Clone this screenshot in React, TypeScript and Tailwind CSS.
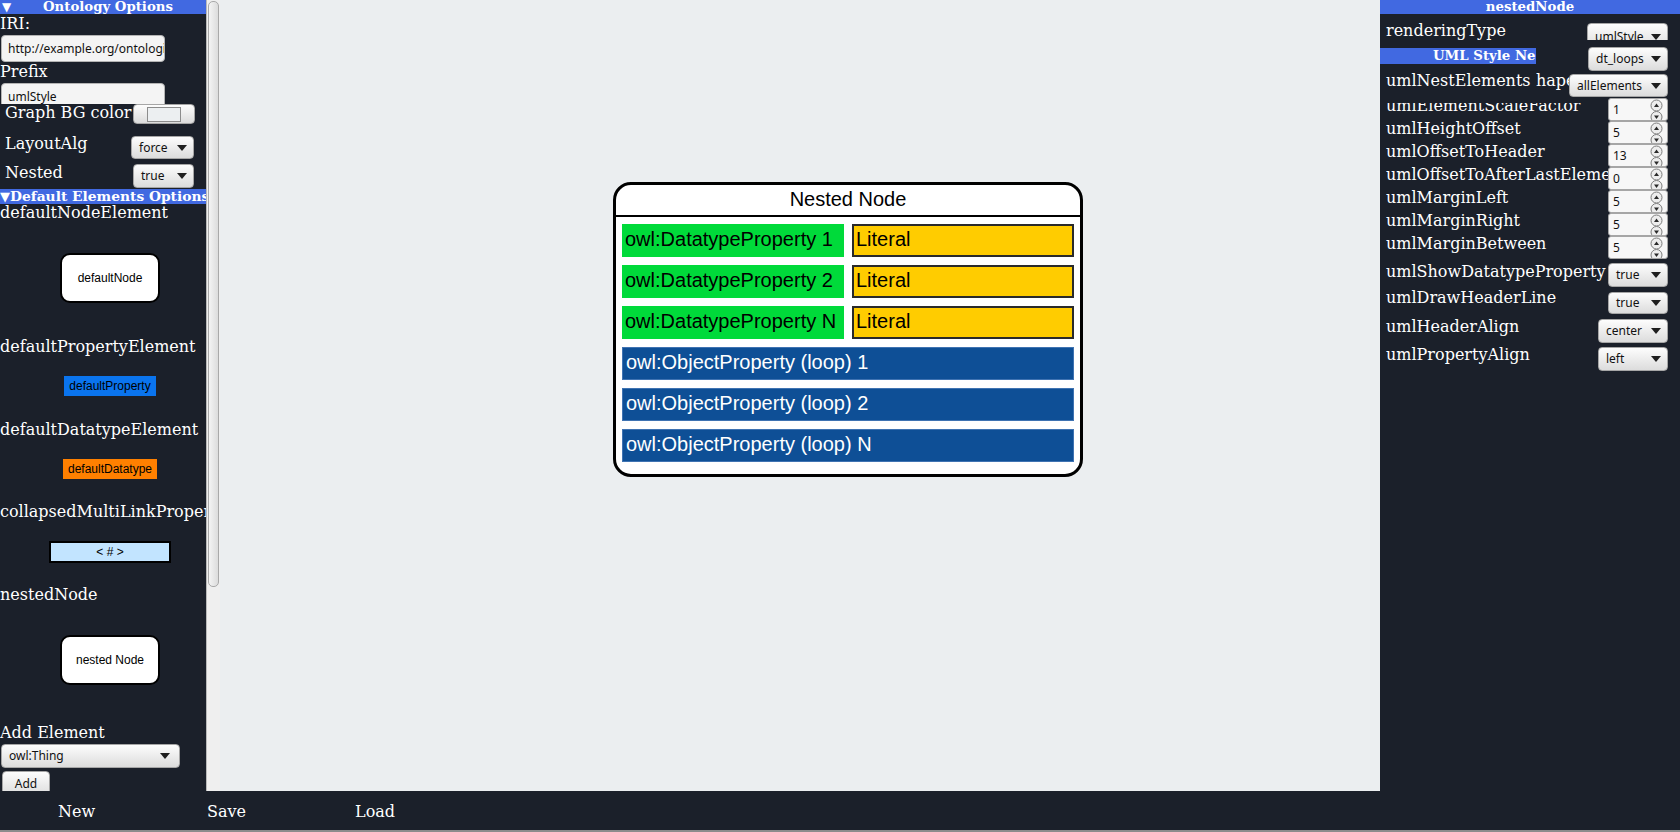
import React from "react";

const serif = "font-['DejaVu_Serif',serif]";
const ui = "font-['Noto_Sans',sans-serif]";
const arial = "font-['Liberation_Sans',Arial,sans-serif]";

function Arrow() {
  return (
    <svg width="10" height="6" viewBox="0 0 10 6" className="shrink-0">
      <path d="M0 0H10L5 6Z" fill="#1f1f1f" />
    </svg>
  );
}

function Sel({ label, className = "" }: { label: string; className?: string }) {
  return (
    <div
      className={`flex shrink-0 items-center justify-between rounded-[4px] border border-[#a6a6a6] bg-linear-to-b from-[#fdfdfd] to-[#dcdcdc] pl-[7px] pr-[6px] text-[12px] leading-none text-[#111] ${ui} ${className}`}
    >
      <span>{label}</span>
      <Arrow />
    </div>
  );
}

function Spin() {
  return (
    <svg width="13" height="21" viewBox="0 0 13 21" className="shrink-0 overflow-hidden">
      <circle cx="6.5" cy="6.5" r="5.5" fill="#ededed" stroke="#7d7d7d" strokeWidth="1" />
      <path d="M4 8H9L6.5 4.6Z" fill="#2a2a2a" />
      <circle cx="6.5" cy="18" r="5.5" fill="#ededed" stroke="#7d7d7d" strokeWidth="1" />
      <path d="M4 16.5H9L6.5 19.9Z" fill="#2a2a2a" />
    </svg>
  );
}

function Num({ v }: { v: string }) {
  return (
    <div
      className={`flex h-[23px] w-[60px] shrink-0 items-start justify-between overflow-hidden rounded-[3px] border border-[#a6a6a6] bg-[#f7f7f7] pl-[4px] pr-[4px] text-[12px] text-[#111] ${ui}`}
    >
      <span className="pt-[4px] leading-[14px]">{v}</span>
      <Spin />
    </div>
  );
}

function NumRow({ label, v }: { label: string; v: string }) {
  return (
    <div className="flex h-[23px] items-start">
      <div className="min-w-0 flex-1 overflow-hidden whitespace-nowrap pl-[6px] -mt-[2.5px] text-[16px] leading-[20px] text-white">
        {label}
      </div>
      <div className="mr-[12px]">
        <Num v={v} />
      </div>
    </div>
  );
}

function LeftPanel() {
  const lbl = "h-[20px] whitespace-nowrap text-[16px] leading-[20px] text-white";
  return (
    <div className={`h-[791px] w-[206px] shrink-0 overflow-hidden bg-[#1b202a] ${serif}`}>
      <div className="flex h-[14px] items-center bg-[#4169e1] text-white">
        <span className="w-[14px] pl-[2px] text-[12px] leading-[14px]">▼</span>
        <span className="ml-[29px] whitespace-nowrap text-[13.3px] font-bold leading-[14px]">Ontology Options</span>
      </div>
      <div className={lbl}>IRI:</div>
      <div
        className={`ml-[1px] mt-[1px] flex h-[27px] w-[164px] items-center overflow-hidden rounded-[4px] border border-[#b4b4b4] bg-[#f4f4f4] pl-[6px] pr-[4px] text-[12px] whitespace-nowrap text-[#111] ${ui}`}
      >
        http://example.org/ontologies/
      </div>
      <div className={lbl}>Prefix</div>
      <div className="ml-[1px] mt-[1px] h-[21px] w-[164px] overflow-hidden">
        <div
          className={`flex h-[27px] w-[164px] items-center rounded-[4px] border border-[#b4b4b4] bg-[#f4f4f4] pl-[6px] text-[12px] text-[#111] ${ui}`}
        >
          umlStyle
        </div>
      </div>
      <div className="flex h-[24px] items-start">
        <div className={`w-[133px] overflow-hidden pl-[5px] -mt-[1.5px] ${lbl}`}>Graph BG color</div>
        <div className="flex h-[20px] w-[62px] items-center justify-center rounded-[4px] border border-[#a6a6a6] bg-linear-to-b from-[#fdfdfd] to-[#dcdcdc]">
          <div className="h-[15px] w-[34px] border border-[#8c8c8c] bg-[#eceff1]" />
        </div>
      </div>
      <div className="flex h-[34px] items-start">
        <div className={`w-[131px] pl-[5px] mt-[5.5px] ${lbl}`}>LayoutAlg</div>
        <Sel label="force" className="mt-[8px] h-[23px] w-[63px]" />
      </div>
      <div className="flex h-[27px] items-start">
        <div className={`w-[133px] pl-[5px] mt-[0.5px] ${lbl}`}>Nested</div>
        <Sel label="true" className="mt-[2px] h-[24px] w-[61px]" />
      </div>
      <div className="flex h-[15px] items-center whitespace-nowrap bg-[#4169e1] text-white">
        <span className="w-[13px] text-[13px] leading-[15px]">▼</span>
        <span className="text-[13.8px] font-bold leading-[15px]">Default Elements Options</span>
      </div>

      <div className={`-mt-[1.5px] ${lbl}`}>defaultNodeElement</div>
      <div
        className={`ml-[60px] mt-[30.5px] flex h-[50px] w-[100px] items-center justify-center rounded-[10px] border-2 border-black bg-white text-[12px] text-black ${arial}`}
      >
        defaultNode
      </div>

      <div className={`mt-[33.5px] ${lbl}`}>defaultPropertyElement</div>
      <div
        className={`ml-[64px] mt-[19.5px] flex h-[20px] w-[92px] items-center justify-center bg-[#0a74ee] text-[12px] text-black ${arial}`}
      >
        defaultProperty
      </div>

      <div className={`mt-[23.5px] ${lbl}`}>defaultDatatypeElement</div>
      <div
        className={`ml-[63px] mt-[19.5px] flex h-[20px] w-[94px] items-center justify-center bg-[#ff8000] text-[12px] text-black ${arial}`}
      >
        defaultDatatype
      </div>

      <div className={`mt-[22.5px] ${lbl}`}>collapsedMultiLinkProperty</div>
      <div
        className={`ml-[49px] mt-[19.5px] flex h-[22px] w-[122px] items-center justify-center border-2 border-black bg-[#c2e4ff] text-[12px] text-black ${arial}`}
      >
        &lt; # &gt;
      </div>

      <div className={`mt-[21.5px] ${lbl}`}>nestedNode</div>
      <div
        className={`ml-[60px] mt-[30.5px] flex h-[50px] w-[100px] items-center justify-center rounded-[10px] border-2 border-black bg-white text-[12px] text-black ${arial}`}
      >
        nested Node
      </div>

      <div className={`mt-[37.5px] ${lbl}`}>Add Element</div>
      <Sel label="owl:Thing" className="ml-[1px] mt-[1.5px] h-[24px] w-[179px] pr-[9px]" />
      <div
        className={`ml-[2px] mt-[3px] flex h-[26px] w-[48px] items-center justify-center rounded-[4px] border border-[#a6a6a6] bg-linear-to-b from-[#fdfdfd] to-[#dcdcdc] text-[12px] text-[#111] ${ui}`}
      >
        Add
      </div>
    </div>
  );
}

function Scrollbar() {
  return (
    <div className="h-[791px] w-[14px] shrink-0 border-l border-[#b9b9b9] bg-[#efefef] pt-[1px]">
      <div className="mx-auto h-[586px] w-[11px] rounded-[5px] border border-[#a9a9a9] bg-linear-to-r from-[#f4f4f4] to-[#dcdcdc]" />
    </div>
  );
}

function Canvas() {
  const row = `flex h-[33px] items-center pb-[3px] text-[20px] whitespace-nowrap ${arial}`;
  return (
    <div className="relative h-[791px] flex-1 bg-[#ebeef0]">
      <div className="absolute left-[393px] top-[182px] flex h-[295px] w-[470px] flex-col rounded-[18px] border-[3px] border-black bg-white">
        <div className={`flex h-[30px] items-center justify-center pb-[2px] text-[20px] text-black ${arial}`}>Nested Node</div>
        <div className="h-[2px] bg-black" />
        <div className="flex flex-col gap-[8px] px-[6px] pt-[7px]">
          {["1", "2", "N"].map((n) => (
            <div key={n} className="flex gap-[8px]">
              <div className={`w-[222px] bg-[#00da3a] pl-[3px] text-black ${row}`}>owl:DatatypeProperty {n}</div>
              <div className={`w-[222px] border-2 border-[#2a2a2a] bg-[#ffcc00] pl-[2px] text-black ${row}`}>Literal</div>
            </div>
          ))}
          {["1", "2", "N"].map((n) => (
            <div key={"o" + n} className={`border border-[#3f73b2] bg-[#0e4f96] pl-[3px] text-white ${row}`}>
              owl:ObjectProperty (loop) {n}
            </div>
          ))}
        </div>
      </div>
    </div>
  );
}

function RightPanel() {
  const lbl = "whitespace-nowrap text-[16px] leading-[20px] text-white";
  return (
    <div className={`h-[791px] w-[300px] shrink-0 overflow-hidden bg-[#1b202a] ${serif}`}>
      <div className="flex h-[14px] items-center justify-center bg-[#4169e1] text-[13.3px] font-bold leading-[14px] text-white">
        nestedNode
      </div>
      <div className="flex h-[33px] items-start">
        <div className={`flex-1 pl-[6px] mt-[6.5px] ${lbl}`}>renderingType</div>
        <div className="mr-[12px] mt-[9px] h-[17px] w-[81px] overflow-hidden">
          <Sel label="umlStyle" className="h-[27px] w-[81px]" />
        </div>
      </div>
      <div className="flex h-[24px] items-start">
        <div className="mt-[1px] flex h-[16px] w-[156px] items-center overflow-hidden whitespace-nowrap bg-[#4169e1] pl-[53px] text-[13.3px] font-bold leading-[16px] text-white">
          UML Style Nested Node
        </div>
        <div className="flex-1" />
        <Sel label="dt_loops" className="mr-[12px] h-[24px] w-[80px]" />
      </div>
      <div className="flex h-[27px] items-start">
        <div className={`w-[156px] pl-[6px] -mt-[0.5px] ${lbl}`}>umlNestElements</div>
        <div className={`w-[33px] overflow-hidden -mt-[0.5px] ${lbl}`}>hape</div>
        <Sel label="allElements" className="mt-[3px] h-[23px] w-[99px]" />
      </div>
      <div className="flex h-[23px] items-start">
        <div className="mt-[5px] h-[18px] min-w-0 flex-1 overflow-hidden">
          <div className={`-mt-[7.5px] pl-[6px] ${lbl}`}>umlElementScaleFactor</div>
        </div>
        <div className="mr-[12px]">
          <Num v="1" />
        </div>
      </div>
      <NumRow label="umlHeightOffset" v="5" />
      <NumRow label="umlOffsetToHeader" v="13" />
      <NumRow label="umlOffsetToAfterLastElement" v="0" />
      <NumRow label="umlMarginLeft" v="5" />
      <NumRow label="umlMarginRight" v="5" />
      <NumRow label="umlMarginBetween" v="5" />
      <div className="flex h-[29px] items-start">
        <div className={`min-w-0 flex-1 overflow-hidden pl-[6px] mt-[2.5px] ${lbl}`}>umlShowDatatypeProperty</div>
        <Sel label="true" className="mr-[12px] mt-[4px] h-[24px] w-[60px]" />
      </div>
      <div className="flex h-[28px] items-start">
        <div className={`flex-1 pl-[6px] -mt-[0.5px] ${lbl}`}>umlDrawHeaderLine</div>
        <Sel label="true" className="mr-[12px] mt-[4px] h-[22px] w-[60px]" />
      </div>
      <div className="flex h-[29px] items-start">
        <div className={`flex-1 pl-[6px] mt-[0.5px] ${lbl}`}>umlHeaderAlign</div>
        <Sel label="center" className="mr-[12px] mt-[3px] h-[24px] w-[70px]" />
      </div>
      <div className="flex h-[30px] items-start">
        <div className={`flex-1 pl-[6px] -mt-[0.5px] ${lbl}`}>umlPropertyAlign</div>
        <Sel label="left" className="mr-[12px] mt-[2px] h-[24px] w-[70px]" />
      </div>
    </div>
  );
}

export default function App() {
  return (
    <div className="flex h-[832px] w-[1680px] flex-col overflow-hidden bg-[#8c8c8c]">
      <div className="flex h-[791px]">
        <LeftPanel />
        <Scrollbar />
        <Canvas />
        <RightPanel />
      </div>
      <div className={`flex h-[39px] bg-[#1b202a] pl-[58px] pt-[11px] text-[16px] leading-[20px] text-white ${serif}`}>
        <span className="w-[149px]">New</span>
        <span className="w-[148px]">Save</span>
        <span className="w-[148px]">Load</span>
      </div>
    </div>
  );
}
